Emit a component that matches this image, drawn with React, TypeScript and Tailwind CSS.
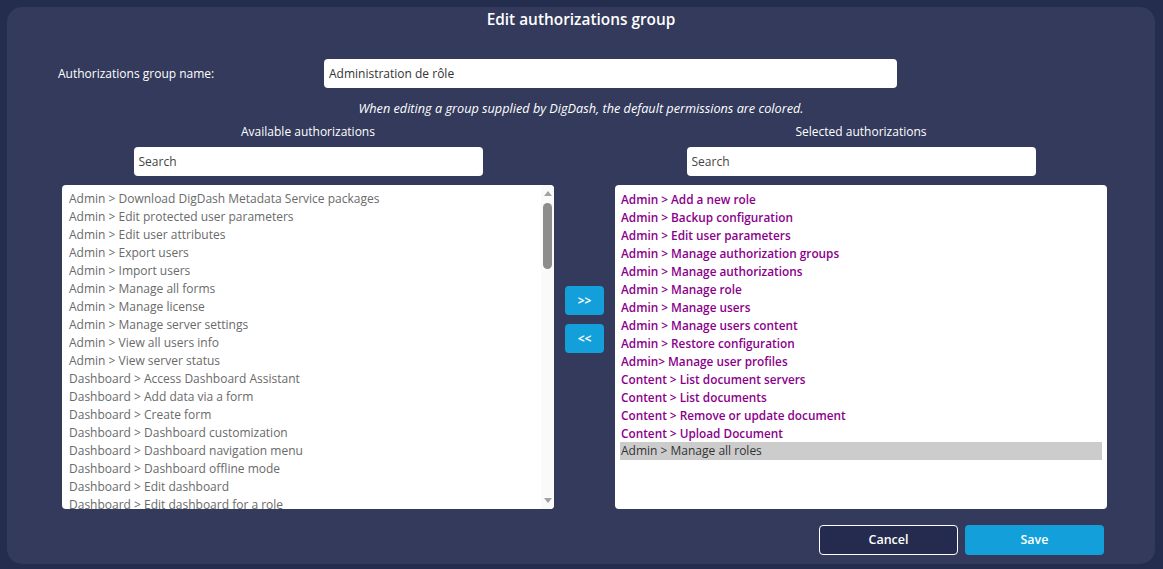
import React from "react";

const available = [
  "Admin > Download DigDash Metadata Service packages",
  "Admin > Edit protected user parameters",
  "Admin > Edit user attributes",
  "Admin > Export users",
  "Admin > Import users",
  "Admin > Manage all forms",
  "Admin > Manage license",
  "Admin > Manage server settings",
  "Admin > View all users info",
  "Admin > View server status",
  "Dashboard > Access Dashboard Assistant",
  "Dashboard > Add data via a form",
  "Dashboard > Create form",
  "Dashboard > Dashboard customization",
  "Dashboard > Dashboard navigation menu",
  "Dashboard > Dashboard offline mode",
  "Dashboard > Edit dashboard",
  "Dashboard > Edit dashboard for a role",
];

const selected = [
  "Admin > Add a new role",
  "Admin > Backup configuration",
  "Admin > Edit user parameters",
  "Admin > Manage authorization groups",
  "Admin > Manage authorizations",
  "Admin > Manage role",
  "Admin > Manage users",
  "Admin > Manage users content",
  "Admin > Restore configuration",
  "Admin> Manage user profiles",
  "Content > List document servers",
  "Content > List documents",
  "Content > Remove or update document",
  "Content > Upload Document",
];

const font = { fontFamily: '"Open Sans", "Noto Sans", sans-serif' };

export default function App() {
  return (
    <div className="w-full h-[569px] bg-[#252d4f] pt-[7px] pl-[7px] pr-[8px]" style={font}>
      <div className="h-[557px] bg-[#333a5c] rounded-[15px] flex flex-col">
        <div className="h-[26px] flex items-center justify-center text-white text-[15.4px] font-semibold">
          Edit authorizations group
        </div>

        <div className="mt-[26px] h-[29px] flex items-center">
          <div className="w-[317px] pl-[51px] text-[12px] text-white">Authorizations group name:</div>
          <div className="w-[573px] h-[29px] bg-white rounded-[4px] flex items-center pl-[5px] pt-[1px] text-[12px] text-[#333]">
            Administration de rôle
          </div>
        </div>

        <div className="mt-[12px] h-[18px] flex items-center justify-center text-[12.7px] italic text-white">
          When editing a group supplied by DigDash, the default permissions are colored.
        </div>

        <div className="mt-[5px] flex pl-[55px]">
          <div className="w-[492px] flex flex-col items-center">
            <div className="h-[18px] flex items-center text-[12px] text-white">Available authorizations</div>
            <div className="mt-[6px] w-[349px] h-[29px] bg-white rounded-[4px] flex items-center pl-[5px] text-[12px] font-medium text-[#444]">
              Search
            </div>
            <div className="mt-[9px] w-[492px] h-[324px] bg-white rounded-[4px] flex overflow-hidden">
              <div className="flex-1 pt-[5px] pl-[5px] overflow-hidden">
                {available.map((t) => (
                  <div key={t} className="h-[18px] leading-[18px] px-[2px] text-[12px] text-[#6a6a6a] whitespace-nowrap">
                    {t}
                  </div>
                ))}
              </div>
              <div className="w-[13px] bg-[#fafafa] flex flex-col items-center">
                <div className="mt-[6px] w-0 h-0 border-l-[4px] border-r-[4px] border-b-[5px] border-l-transparent border-r-transparent border-b-[#a3a3a3]" />
                <div className="mt-[7px] w-[9px] h-[66px] bg-[#8d8d8d] rounded-[5px]" />
                <div className="flex-1" />
                <div className="mb-[6px] w-0 h-0 border-l-[4px] border-r-[4px] border-t-[5px] border-l-transparent border-r-transparent border-t-[#a3a3a3]" />
              </div>
            </div>
          </div>

          <div className="ml-[11px] w-[39px] pt-[163px] flex flex-col gap-[9px]">
            <div className="h-[29px] bg-[#139fda] rounded-[4px] flex items-center justify-center text-white text-[12px] font-bold">
              &gt;&gt;
            </div>
            <div className="h-[29px] bg-[#139fda] rounded-[4px] flex items-center justify-center text-white text-[12px] font-bold">
              &lt;&lt;
            </div>
          </div>

          <div className="ml-[11px] w-[492px] flex flex-col items-center">
            <div className="h-[18px] flex items-center text-[12px] text-white">Selected authorizations</div>
            <div className="mt-[6px] w-[349px] h-[29px] bg-white rounded-[4px] flex items-center pl-[5px] text-[12px] font-medium text-[#444]">
              Search
            </div>
            <div className="mt-[9px] w-[492px] h-[324px] bg-white rounded-[4px] pt-[5px] px-[5px] overflow-hidden">
              {selected.map((t) => (
                <div key={t} className="h-[18px] leading-[18px] px-[1px] text-[11.8px] font-semibold text-[#8b008b] whitespace-nowrap">
                  {t}
                </div>
              ))}
              <div className="h-[18px] leading-[18px] px-[1px] text-[12px] text-[#333] bg-[#cccccc] whitespace-nowrap">
                Admin &gt; Manage all roles
              </div>
            </div>
          </div>
        </div>

        <div className="mt-[16px] flex justify-end pr-[51px] gap-[7px]">
          <div className="w-[139px] h-[30px] border border-white rounded-[4px] bg-[#242b4e] flex items-center justify-center text-white text-[12.5px] font-semibold">
            Cancel
          </div>
          <div className="w-[139px] h-[30px] rounded-[4px] bg-[#139fda] flex items-center justify-center text-white text-[12.5px] font-semibold">
            Save
          </div>
        </div>
      </div>
    </div>
  );
}
